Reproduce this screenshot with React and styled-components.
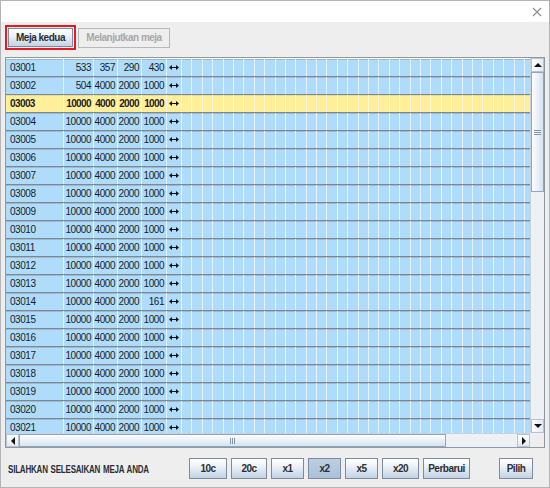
import React from "react";
import styled, { createGlobalStyle } from "styled-components";

const Global = createGlobalStyle`
  html, body { margin: 0; padding: 0; background: #fff; }
  * { box-sizing: border-box; }
`;

const FONT = `"Liberation Sans", Arial, sans-serif`;

const Window = styled.div`
  width: 550px;
  height: 488px;
  border: 1px solid #b4b4b4;
  display: flex;
  flex-direction: column;
  font-family: ${FONT};
  background: #eeeeee;
  overflow: hidden;
`;

const TitleBar = styled.div`
  height: 21px;
  background: #ffffff;
  display: flex;
  justify-content: flex-end;
  align-items: center;
  padding-right: 6px;
  flex: none;
`;

const Close = styled.div`
  width: 12px;
  height: 12px;
  display: flex;
  align-items: center;
  justify-content: center;
`;

const Body = styled.div`
  flex: 1;
  display: flex;
  flex-direction: column;
  padding: 3px 4px 0 4px;
  min-height: 0;
`;

const Toolbar = styled.div`
  height: 25px;
  display: flex;
  align-items: center;
  gap: 2px;
  flex: none;
`;

const Focus = styled.div`
  border: 2px solid #e31b23;
  padding: 1px;
  display: flex;
`;

const Button = styled.button`
  font-family: ${FONT};
  font-weight: bold;
  font-size: 10px;
  letter-spacing: -0.5px;
  white-space: nowrap;
  color: ${(p) => (p.disabled ? "#a7a7a7" : "#2a2f36")};
  height: ${(p) => p.$h || 21}px;
  width: ${(p) => p.$w}px;
  padding: 0;
  border: 1px solid ${(p) => (p.disabled ? "#b8b8b8" : "#7c8c9c")};
  border-radius: 0;
  background: ${(p) =>
    p.disabled
      ? "#eeeeee"
      : p.$pressed
      ? "linear-gradient(#bcd0e3, #a9c0d7)"
      : "linear-gradient(#ffffff 0%, #eef3f8 35%, #d3e0ec 75%, #c3d4e5 100%)"};
  display: flex;
  align-items: center;
  justify-content: center;
  flex: none;
  cursor: default;
`;

const Pane = styled.div`
  margin-top: 7px;
  height: 391px;
  border: 1px solid #8e99a4;
  display: grid;
  grid-template-columns: 1fr 14px;
  grid-template-rows: 1fr 14px;
  background: #ffffff;
  flex: none;
`;

const Viewport = styled.div`
  overflow: hidden;
  background: #ffffff;
  padding-top: 1px;
`;

const Row = styled.div`
  display: grid;
  grid-template-columns: 58px 30px 24px 24px 25px 15px repeat(34, 10.4px);
  height: 18px;
  background: ${(p) => (p.$selected ? "#ffef9b" : "#b0dcfb")};
  border-bottom: 1px solid #7f8892;
  box-shadow: inset 0 1px 0 ${(p) => (p.$selected ? "#e9dc98" : "#9fb8cc")};
  font-weight: ${(p) => (p.$selected ? "bold" : "normal")};
  font-size: 10px;
  letter-spacing: ${(p) => (p.$selected ? "-0.6px" : "-0.45px")};
  color: #1a1e24;
`;

const Cell = styled.div`
  border-right: 1px solid ${(p) => (p.$selected ? "#fff8d8" : "#e4f2fd")};
  display: flex;
  align-items: center;
  justify-content: ${(p) => (p.$align === "right" ? "flex-end" : p.$align === "center" ? "center" : "flex-start")};
  padding: 0 ${(p) => (p.$align === "right" ? 2 : 0)}px 0 ${(p) => (p.$align === "left" ? 4 : 0)}px;
  white-space: nowrap;
  overflow: hidden;
  line-height: 1;
`;

const VScroll = styled.div`
  display: flex;
  flex-direction: column;
  background: #eef1f4;
  border-left: 1px solid #c9d2da;
`;

const HScroll = styled.div`
  display: flex;
  background: #eef1f4;
  border-top: 1px solid #c9d2da;
`;

const Corner = styled.div`
  background: #eeeeee;
`;

const ArrowBtn = styled.div`
  width: ${(p) => (p.$horizontal ? "13px" : "100%")};
  height: ${(p) => (p.$horizontal ? "100%" : "14px")};
  flex: none;
  display: flex;
  align-items: center;
  justify-content: center;
  background: linear-gradient(${(p) => (p.$horizontal ? "#ffffff, #e2eaf2" : "90deg, #ffffff, #e2eaf2")});
  border: 1px solid #b7c4d0;
`;

const Track = styled.div`
  flex: 1;
  display: flex;
  flex-direction: ${(p) => (p.$horizontal ? "row" : "column")};
`;

const Thumb = styled.div`
  flex: none;
  width: ${(p) => (p.$horizontal ? `${p.$size}px` : "100%")};
  height: ${(p) => (p.$horizontal ? "100%" : `${p.$size}px`)};
  border: 1px solid #8ea6be;
  background: ${(p) =>
    p.$horizontal
      ? "linear-gradient(#fbfdff, #e6eef6 60%, #d5e2ee)"
      : "linear-gradient(90deg, #fbfdff, #e6eef6 60%, #d5e2ee)"};
  display: flex;
  align-items: center;
  justify-content: center;
`;

const Grip = styled.div`
  width: ${(p) => (p.$horizontal ? "5px" : "7px")};
  height: ${(p) => (p.$horizontal ? "6px" : "5px")};
  background: ${(p) =>
    p.$horizontal
      ? "repeating-linear-gradient(90deg, #8296ab 0 1px, transparent 1px 2px)"
      : "repeating-linear-gradient(#8296ab 0 1px, transparent 1px 2px)"};
`;

const Bottom = styled.div`
  flex: 1;
  display: flex;
  align-items: center;
  padding: 1px 12px 0 3px;
`;

const LabelBox = styled.div`
  flex: 1;
  min-width: 0;
`;

const Label = styled.div`
  display: inline-block;
  font-size: 10px;
  font-weight: bold;
  color: #2a2f36;
  letter-spacing: -0.25px;
  word-spacing: 1px;
  white-space: nowrap;
  transform: scaleX(0.8);
  transform-origin: left center;
`;

const Group = styled.div`
  display: flex;
  gap: 4px;
  align-items: center;
`;

const Spacer = styled.div`
  width: 21px;
`;

const Tri = ({ dir }) => {
  const pts = {
    up: "0,5 4,1 8,5",
    down: "0,1 4,5 8,1",
    left: "5,0 1,4 5,8",
    right: "1,0 5,4 1,8",
  }[dir];
  const vert = dir === "up" || dir === "down";
  return (
    <svg width={vert ? 8 : 6} height={vert ? 6 : 8} viewBox={vert ? "0 0 8 6" : "0 0 6 8"}>
      <polygon points={pts} fill="#111" />
    </svg>
  );
};

const DoubleArrow = () => (
  <svg width="10" height="5" viewBox="0 0 10 5">
    <polygon points="0,2.5 3,0 3,5" fill="#111" />
    <polygon points="10,2.5 7,0 7,5" fill="#111" />
    <rect x="2" y="2" width="6" height="1" fill="#111" />
  </svg>
);

const rows = Array.from({ length: 21 }, (_, i) => {
  const id = `030${String(i + 1).padStart(2, "0")}`;
  let v = [10000, 4000, 2000, 1000];
  if (i === 0) v = [533, 357, 290, 430];
  if (i === 1) v = [504, 4000, 2000, 1000];
  if (i === 13) v = [10000, 4000, 2000, 161];
  return { id, v, selected: i === 2 };
});

export default function App() {
  return (
    <>
      <Global />
      <Window>
        <TitleBar>
          <Close>
            <svg width="10" height="10" viewBox="0 0 10 10">
              <path d="M1 1 L9 9 M9 1 L1 9" stroke="#8a8a8a" strokeWidth="1.1" fill="none" />
            </svg>
          </Close>
        </TitleBar>
        <Body>
          <Toolbar>
            <Focus>
              <Button $w={65} $h={19}>Meja kedua</Button>
            </Focus>
            <Button $w={92} $h={20} disabled>
              Melanjutkan meja
            </Button>
          </Toolbar>
          <Pane>
            <Viewport>
              {rows.map((r) => (
                <Row key={r.id} $selected={r.selected}>
                  <Cell $align="left" $selected={r.selected}>{r.id}</Cell>
                  {r.v.map((n, k) => (
                    <Cell key={k} $align="right" $selected={r.selected}>
                      {n}
                    </Cell>
                  ))}
                  <Cell $align="center" $selected={r.selected}>
                    <DoubleArrow />
                  </Cell>
                  {Array.from({ length: 34 }, (_, k) => (
                    <Cell key={`e${k}`} $selected={r.selected} />
                  ))}
                </Row>
              ))}
            </Viewport>
            <VScroll>
              <ArrowBtn>
                <Tri dir="up" />
              </ArrowBtn>
              <Track>
                <Thumb $size={120}>
                  <Grip />
                </Thumb>
              </Track>
              <ArrowBtn>
                <Tri dir="down" />
              </ArrowBtn>
            </VScroll>
            <HScroll>
              <ArrowBtn $horizontal>
                <Tri dir="left" />
              </ArrowBtn>
              <Track $horizontal>
                <Thumb $horizontal $size={427}>
                  <Grip $horizontal />
                </Thumb>
              </Track>
              <ArrowBtn $horizontal>
                <Tri dir="right" />
              </ArrowBtn>
            </HScroll>
            <Corner />
          </Pane>
          <Bottom>
            <LabelBox>
              <Label>SILAHKAN SELESAIKAN MEJA ANDA</Label>
            </LabelBox>
            <Group>
              <Button $w={38}>10c</Button>
              <Button $w={36}>20c</Button>
              <Button $w={33}>x1</Button>
              <Button $w={33} $pressed>x2</Button>
              <Button $w={33}>x5</Button>
              <Button $w={37}>x20</Button>
              <Button $w={47}>Perbarui</Button>
              <Spacer />
              <Button $w={34}>Pilih</Button>
            </Group>
          </Bottom>
        </Body>
      </Window>
    </>
  );
}
